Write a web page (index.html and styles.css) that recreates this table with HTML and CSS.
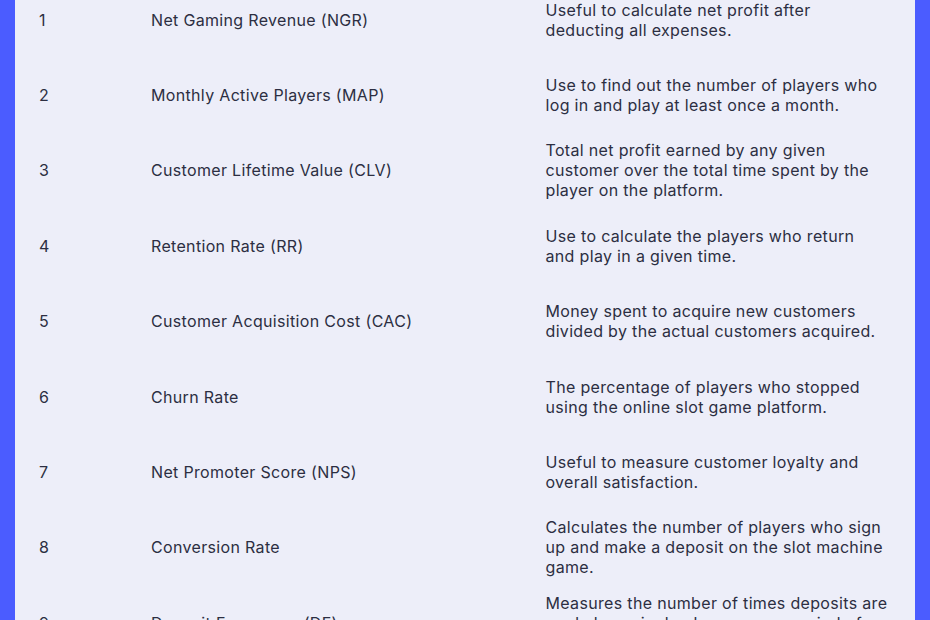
FILE: index.html
```html
<!DOCTYPE html>
<html lang="en">
<head>
<meta charset="utf-8">
<link rel="stylesheet" href="styles.css">
</head>
<body>
<div class="frame">
  <div class="panel">
    <table class="kpi">
      <colgroup>
        <col class="c-num">
        <col class="c-name">
        <col class="c-desc">
      </colgroup>
      <tbody>
        <tr><td class="num">1</td><td class="name">Net Gaming Revenue (NGR)</td><td class="desc">Useful to calculate net profit after deducting all expenses.</td></tr>
        <tr><td class="num">2</td><td class="name">Monthly Active Players (MAP)</td><td class="desc">Use to find out the number of players who log in and play at least once a month.</td></tr>
        <tr><td class="num">3</td><td class="name">Customer Lifetime Value (CLV)</td><td class="desc">Total net profit earned by any given customer over the total time spent by the player on the platform.</td></tr>
        <tr><td class="num">4</td><td class="name">Retention Rate (RR)</td><td class="desc">Use to calculate the players who return and play in a given time.</td></tr>
        <tr><td class="num">5</td><td class="name">Customer Acquisition Cost (CAC)</td><td class="desc">Money spent to acquire new customers divided by the actual customers acquired.</td></tr>
        <tr><td class="num">6</td><td class="name">Churn Rate</td><td class="desc">The percentage of players who stopped using the online slot game platform.</td></tr>
        <tr><td class="num">7</td><td class="name">Net Promoter Score (NPS)</td><td class="desc">Useful to measure customer loyalty and overall satisfaction.</td></tr>
        <tr><td class="num">8</td><td class="name">Conversion Rate</td><td class="desc">Calculates the number of players who sign up and make a deposit on the slot machine game.</td></tr>
        <tr><td class="num">9</td><td class="name">Deposit Frequency (DF)</td><td class="desc">Measures the number of times deposits are made by a single player over a period of time.</td></tr>
      </tbody>
    </table>
  </div>
</div>
</body>
</html>
```

FILE: styles.css
```css
html, body {
  margin: 0;
  padding: 0;
  height: 100%;
  overflow: hidden;
}
body {
  background: #4b5cff;
  font-family: Inter, "Noto Sans", sans-serif;
  color: #2c2e42;
}
.frame {
  padding: 0 15px;
  height: 100%;
  box-sizing: border-box;
}
.panel {
  background: #edeef9;
  height: 100%;
  overflow: hidden;
}
.kpi {
  border-collapse: collapse;
  table-layout: fixed;
  margin-top: -18px;
  width: 100%;
  font-size: 16px;
  line-height: 20px;
  letter-spacing: 0.33px;
}
.c-num { width: 136px; }
.c-name { width: 394.5px; }
.c-desc { width: 369.5px; }
.kpi td {
  height: 75.4px;
  padding: 0;
  vertical-align: middle;
}
.num {
  padding-left: 24px !important;
}
.desc {
  padding-right: 27.5px !important;
}
```
